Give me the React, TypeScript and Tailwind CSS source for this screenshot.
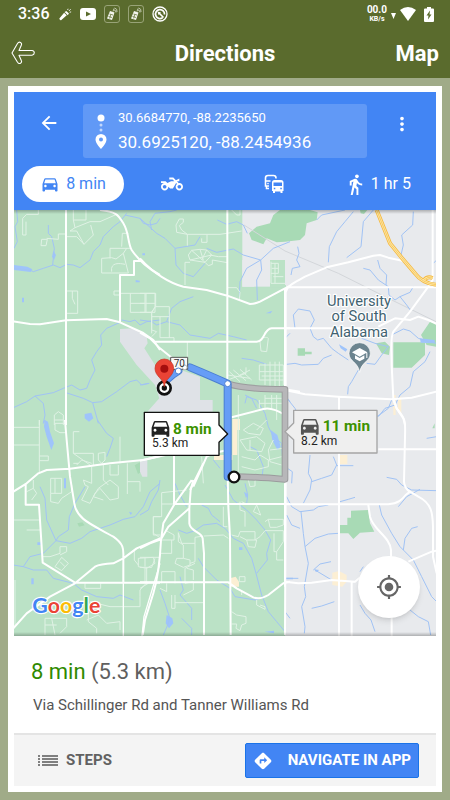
import { MdArrowBack, MdDirections, MdDirectionsCar, MdDirectionsWalk, MdMoreVert, MdMyLocation, MdTwoWheeler } from 'react-icons/md';

interface Tile {
  x: number;
  y: number;
  water: string;
  minor: string;
  major: string;
}

// Map is drawn at 3 units per pixel, one tile per area
const tiles: Tile[] = [
  {
    x: -12,
    y: -15,
    water:
      'M20 15L23 50L15 65L22 110L12 130M115 60V85L125 95L133 130L128 180M10 190L60 195L70 200L100 190L130 180L150 188L170 178L190 180L210 188L240 165L250 140L270 120L280 95L310 65L330 50L350 25M345 30L390 40L400 55L420 60L440 55L450 40M10 608L50 590L75 573L130 563L160 550L185 540L210 555L230 550L240 525L255 495L245 465L260 440L275 420L272 390L290 370L330 352M75 573L100 595L105 630L100 655M168 563L220 580L248 593L275 590L320 560L360 530L380 525L395 540L418 535M248 593L265 655M335 345L360 350L375 345L390 360L410 350L450 345',
    minor:
      'M85 15V28H50L38 40V90H48V50M95 103H112L108 122H93ZM110 100L145 103V87H168M190 15V45H228V15M190 45L195 68L240 50H270L320 28M195 68L180 78H200L222 118L250 90L242 60M168 95H200L222 118M337 85H355M337 85L335 125M275 160V204H355L340 145M275 160L305 158L318 162L340 145L350 130M300 130H362M300 130V160M305 200C300 170 330 175 345 178M168 258H203V325H168M187 258V280L195 298M333 265H437V305L425 320V385M361 265V322H405V265M361 295H405M333 258H312V270H333M405 322H425M133 660V630L145 620L160 630V660M133 645H160M88 645V660',
    major:
      'M168 15V660M10 349L60 357L90 358L168 346L290 342L330 352L400 384L430 405L450 435M270 15C320 20 325 30 340 55C358 85 352 110 365 135C385 165 420 195 450 210M330 352V210H372V168H398',
  },
  {
    x: 378,
    y: -15,
    water:
      'M0 40L50 85L75 100L105 130L165 120L180 95M35 75L30 50L45 25L90 20L110 15M105 130L108 180L130 205L160 215L195 175M232 45L260 58L290 50L310 60L322 85M200 130L230 142L280 132L310 150L362 165L400 130L450 110M362 165L365 195L350 225L352 285M362 165L320 190L300 230L298 275M0 345L35 350L50 360L80 350L95 310L120 290L160 275M80 350L120 360L150 390L210 400L235 385L280 395L320 405M305 460L340 465L380 478M315 570L335 580L350 610M435 400L450 385',
    minor:
      'M142 122V88L125 75L118 62L130 52V42H118L108 60L110 82L142 88H240L305 78M185 112V100M185 112H201V88M145 150L155 136L180 133L200 135L215 150L195 172L150 165ZM155 136L195 172M180 133L190 165M200 135L185 165M150 165L215 150M210 150L235 155L262 155M195 172L205 182L217 178V165L262 173M150 172H135V240M262 248H290L300 262L298 285M0 265H45V322H0M18 265V322M0 295H45M45 305H88V398M45 305L35 325V375L50 380L35 395M35 335H88M60 335V398H102V410M142 410V462M360 410L363 438L380 440L385 400C382 395 360 395 360 410M393 170V235H435M393 175H415V205H393M395 190H415M400 215H430M405 175V235M275 15L290 30H300V15',
    major:
      'M0 160C40 205 90 235 130 245L200 255L262 272L330 297Q345 297 360 290L435 250L450 243M262 15V540M40 410H350C375 410 370 372 395 370H450M435 250V550M0 383L30 400L60 430L100 462',
  },
  {
    x: 813,
    y: -15,
    water:
      'M95 45L110 30L180 15M205 20L180 50L155 80L133 125L130 172M265 15L235 50L228 125L185 158M385 20L383 60L350 90L355 120L348 150M38 125L42 145L35 165L45 185L22 190L18 210M235 190L255 195L280 225L310 245L312 270L330 285L345 275L365 300L378 318M278 165L285 190L305 210L303 240M345 275L375 262L385 245M30 370L25 330L40 312L75 318L88 345L75 370L85 395L98 405L115 400L140 430L160 445L190 465M5 478L30 475L50 480L100 478L115 460L140 450M230 400L270 415L310 425L290 450L270 478L245 475M220 495L200 530L190 545L188 568M435 440L420 470L385 500L375 545L345 570L330 600L300 610L280 635M320 390L355 372L375 378L400 400L430 410L455 415M445 175L455 165M15 590L0 570',
    minor: '',
    major:
      'M443 15V225L430 245L375 320L325 380C315 400 320 430 320 480L325 580L335 610L355 640L360 660M2 262C5 240 40 228 60 215L125 187L190 172L265 152L285 150L310 158L355 168M10 247H455M0 370H230M280 365L330 340L375 345L400 335L430 345L455 357M0 555L60 568L160 575L320 583L380 578L455 560M162 575V615M2 262V560',
  },
  {
    x: -12,
    y: 630,
    water:
      'M262 0L290 40L310 55L300 85L290 110M90 200L105 235L110 300L138 362L100 400L60 410L40 440L10 435M138 362L180 370L215 355L240 335L300 315L340 298L375 290L400 260L420 215L450 190M138 362L145 350L175 330L178 290L195 250L225 200M40 440L70 450L110 450L130 475L190 490L215 510L260 530L310 535L330 525L370 540M105 0L100 10',
    minor:
      'M88 0V160M10 22H88M10 75H88M88 108H115V122H88M135 10V30L150 38H165M135 10H165M190 35H208M190 35V100H250V135M190 100L240 135M200 135L215 120L245 130M190 130H205M265 100L285 97V120L275 130L265 120ZM122 175H155V220H122ZM122 220V245L145 250L155 235L185 215V195M50 215L70 205V180M70 205L80 220L65 240M135 175V220M245 140V190L220 180L225 195L235 200L215 240L240 250L255 220L270 205L300 240L325 235V200L300 180L265 205L250 230L280 240M280 135V180L295 195M300 135V165H325V135M330 50V130M352 130V222M352 185H390V215M10 300H90M50 330H90M98 410H120L150 400V380H170V395L150 405M135 440L155 412L175 430L155 452ZM150 425L165 440M373 390V420L385 435M385 415L430 412L435 430L410 445L385 440ZM405 412V440M450 290H430V345H450M405 445V488M390 530V510L410 488M225 490V505H272V490M240 545L300 560L390 560V530M105 595H170V620L150 640M105 595V645M125 595L135 645M105 615H140M15 480V620M235 575V605L260 625V640M230 600L265 585L290 610L330 605V630',
    major:
      'M165 0L170 60L180 170L193 250C200 300 250 315 310 350C345 375 340 390 340 415V488M10 215L50 190L85 160L110 150L180 146L300 130L400 120L450 108M47 190V254H87L98 428L195 488H450M10 625L50 580L120 530L195 490L255 440Q270 432 310 430L340 415L380 385L450 355',
  },
  {
    x: 378,
    y: 810,
    water:
      'M60 0L55 30L35 65L25 90L0 105M105 10L120 45L140 80M115 150L140 160L165 152L190 135L230 130L255 145L280 175L310 190L335 235L348 280L365 345L385 395L410 425L435 455M185 75L205 85L215 105L240 125M255 15L280 60L320 90L350 120L375 150L392 180L380 220L382 240L350 280M315 10L323 45L320 70M175 235L190 260L230 300L270 325L285 350L345 360L375 350M120 290L130 330L120 345L155 385V420M60 330L75 370L88 410L85 430L70 465M125 415L155 445V465',
    minor:
      'M65 110V38L140 30M65 72H100M65 110H40V160L63 175M65 180H102V165L75 150M95 180V220H63M45 235L35 262H0M0 232H60M20 262V310M115 158L125 190H165V172L190 168M115 158V185L130 195V235H110L105 250L130 262L150 255V240L130 235M165 190V245L150 250M65 310V275H105V310M0 325L25 310M60 325L80 335V310M135 310V265L165 250M135 310L160 305V330L130 345M140 265L160 270V300M105 368H190M95 345V385H105V345M192 168L250 165L265 175M250 80V140H262M300 65V90L315 95V140M305 65L315 70M350 75L340 95L362 105L350 75M385 118H430V135L410 142H390ZM385 118L375 125M275 165L295 170L300 155H345V180L360 170L375 152H430V185L410 215L402 215V160M300 170L320 180L325 200L345 202L350 180L320 180M410 215V240H430M275 395L290 405L318 410V430L305 435L300 452L288 445L290 432H275M298 290H315V305H298ZM350 360V375L375 388V380L360 375M325 0L330 20L345 18V0M305 345V330',
    major:
      'M155 0L105 70L70 130L63 180C60 240 55 290 40 340L15 420L8 465M0 205L30 190L63 178L85 140L148 85M160 0L152 30L148 85V130C150 155 185 155 188 175L192 220V465M102 -80V72H450M263 -20L265 80L270 170L272 465M0 307H265L290 325L340 352Q360 360 385 345L430 310L450 305M437 0L435 465',
  },
  {
    x: 378,
    y: 390,
    water: 'M315 190L320 170L350 180L375 220L385 260L400 290L425 310L430 390M0 135L25 130M330 320L350 330L370 380L365 420M220 360L240 385',
    minor:
      'M262 105L330 115M268 95L300 125M280 90L318 122M300 88L335 120M318 82V100L268 118M300 105L330 90M358 75H430V135M358 75V120H435M358 95H430M375 70V135M390 65V140M405 65V140M418 65V140M365 108H435M295 165V400M358 180V205M358 190H430V240M375 165V210M395 165V205M410 165V240M375 175H435M310 270L340 250L370 265L360 285L325 280ZM300 300L350 290L375 310L365 335L320 330ZM330 300V330M350 270L380 240M305 350L345 360L360 345L385 360V380L345 390L305 380M385 360L425 350M390 330L430 325M400 300L385 330L390 365L425 375M102 270V450M185 350L190 430',
    major: 'M275 232L370 207Q395 200 435 225M435 148L480 155M0 362L100 340M160 440L200 350L220 340L262 330M102 345V450M150 450L190 370',
  },
  {
    x: 813,
    y: 570,
    water:
      'M10 0L30 25L45 55M20 250L22 215L0 200M55 310L75 270L80 240L70 220L75 165M80 245L110 235L140 225L155 195L145 170M155 197L205 197M165 305L190 298L210 292M5 290L20 320L45 335L85 330L100 320L130 315M48 335L55 400L60 440L70 490L58 560L62 590L50 620L60 680L58 700M5 345L20 375L45 385M60 440L90 415L130 402L160 400M90 510L140 540M85 510L105 492L138 485M80 625L110 618L148 605M305 232L335 238L350 255L380 270L455 272M340 320L365 290L405 268M283 315L290 345L320 400L345 440L385 480L410 530L440 590L455 605M355 450L360 415L380 385L398 380M225 515L235 500M225 615L240 640L258 660L270 695M375 630L400 650L430 665L437 705M320 0L310 25L290 40L275 50M425 115L455 110M0 535L40 535M0 635L15 655',
    minor: '',
    major:
      'M0 313H310C340 310 350 300 362 285L375 275M162 30V710M280 148H455M325 0L335 25C360 55 362 60 360 110L357 245Q358 265 375 275L400 290C440 310 443 340 444 380V470L455 520M250 315L255 350C265 390 315 410 318 450V470M320 650V710M0 545L40 550L80 548L140 540L210 545L240 520M200 545V710M370 485L440 455L455 452M0 250V560',
  },
];

const carPath =
  'M18.92 6.01C18.72 5.42 18.16 5 17.5 5h-11c-.66 0-1.21.42-1.42 1.01L3 12v8c0 .55.45 1 1 1h1c.55 0 1-.45 1-1v-1h12v1c0 .55.45 1 1 1h1c.55 0 1-.45 1-1v-8l-2.08-5.99zM6.5 16c-.83 0-1.5-.67-1.5-1.5S5.67 13 6.5 13s1.5.67 1.5 1.5S7.33 16 6.5 16zm11 0c-.83 0-1.5-.67-1.5-1.5s.67-1.5 1.5-1.5 1.5.67 1.5 1.5-.67 1.5-1.5 1.5zM5 11l1.5-4.5h11L19 11H5z';

const StatusBar = () => (
  <div className="flex h-7 items-center justify-between pl-[18px] pr-4 text-white">
    <div className="flex items-center gap-2">
      <span className="w-8 text-base font-medium">3:36</span>
      <svg className="h-4 w-[14px]" viewBox="0 0 16 16" fill="currentColor">
        <path d="M1.500 13L7 6.500l3 3L3.500 15q-1.500.5-2-2zM7.500 5.700l2-1.200 3 3-1.300 2z" />
        <path d="M11 3.500l.5-1.500M12.500 4.500l2-2M13.300 6l1.700-.4" stroke="currentColor" fill="none" />
      </svg>
      <svg className="h-3 w-4" viewBox="0 0 16 12">
        <rect width="16" height="12" rx="3" fill="white" />
        <path d="M6 3.500v5L11 6z" fill="#5a6b2d" />
      </svg>
      {[0, 1].map((n) => (
        <svg key={n} className="h-[18px] w-4" viewBox="0 0 16 18" fill="none">
          <rect x=".5" y=".5" width="15" height="17" rx="2.500" stroke="#98a377" />
          <path d="M6 6l4.500 1.500-2.500 7.500-5-1.500z" fill="#f4f5ef" />
          <path d="M5.500 9l3.500 1M4.500 11.500l3.500 1M6.700 9.500l-1 4" stroke="#5a6b2d" strokeWidth=".7" />
          <path d="M9 6.500l1-3M10 5q2 0 2 2.500M10.500 3q3 .5 2.500 4" stroke="#c3cab0" />
        </svg>
      ))}
      <svg className="h-4 w-4" viewBox="0 0 16 16" fill="none" stroke="white">
        <circle cx="8" cy="8" r="7" strokeWidth="1.300" />
        <path d="M10.500 11.800a4.500 4.500 0 1 1 2-3.300M7 7l4.500 4.500" strokeWidth="1.700" />
        <path d="M5.500 5.500l1 3.500 2.500-2.500z" fill="white" stroke="none" />
      </svg>
    </div>
    <div className="flex items-center gap-1">
      <div className="flex flex-col items-center font-bold">
        <span className="text-[10px] leading-[10px]">00.0</span>
        <span className="text-[7px] leading-[9px]">KB/s</span>
      </div>
      <svg className="mt-1 h-[6px] w-[5px]" viewBox="0 0 5 6">
        <path d="M0 0h5L2.500 6z" fill="white" />
      </svg>
      <svg className="h-[14px] w-4" viewBox="0 0 16 14">
        <path d="M0 3Q8-3 16 3L8 14z" fill="white" />
      </svg>
      <svg className="ml-1 h-[15px] w-[10px]" viewBox="0 0 10 15">
        <path d="M3 0h4v1.500h2q1 0 1 1V14q0 1-1 1H1q-1 0-1-1V2.500q0-1 1-1h2z" fill="white" />
        <path d="M6 3.500L2.500 8.500h2L4 12.500l3.500-5h-2z" fill="#5a6b2d" />
      </svg>
    </div>
  </div>
);

const Header = () => (
  <header className="h-[78px] bg-[#5a6b2d] text-white">
    <StatusBar />
    <div className="grid h-[50px] grid-cols-[1fr_auto_1fr] items-center px-[11px]">
      <button aria-label="Back" className="w-6">
        <svg className="h-6 w-6" viewBox="0 0 24 24" fill="none" stroke="white" strokeWidth="1.100" strokeLinejoin="round">
          <path d="M1 12L6.500 2.500q1.300-2 3-1 1.700 1 .7 3L8 9.500H21q2.300.3 2.300 2.300T21 14.200H8l2.200 5q1 2-.7 3t-3-1z" />
        </svg>
      </button>
      <h1 className="text-[22px] font-bold">Directions</h1>
      <button className="justify-self-end text-[22px] font-bold">Map</button>
    </div>
  </header>
);

// Two buses, the front one solid
const TransitIcon = () => (
  <svg className="h-5 w-5" viewBox="0 0 20 20" fill="none" stroke="currentColor">
    <path d="M12 4.500V4q0-2.500-2.500-2.500H4Q1.500 1.500 1.500 4v8H5M1.500 7h5M2.500 12v2.500H5" strokeWidth="1.600" />
    <circle cx="4" cy="9.600" r=".8" fill="currentColor" stroke="none" />
    <path d="M8 17V8.500Q8 6 10.500 6h6.500q2.500 0 2.500 2.500V17h-1v2h-2v-1.500h-5.500V19H9v-2z" fill="currentColor" stroke="none" />
    <path d="M9.500 8.500H18V12H9.500z" fill="#4285f4" stroke="none" />
    <path d="M9.800 14.500h1.500M16.300 14.500h1.500" stroke="#4285f4" strokeWidth="1.500" />
  </svg>
);

const RouteHeader = () => (
  <div className="bg-[#4285f4] text-white">
    <div className="flex items-start pl-6 pr-[23px] pt-3">
      <button aria-label="Close route" className="mt-2 h-[22px] w-[22px]">
        <MdArrowBack className="h-[22px] w-[22px]" />
      </button>
      <div className="ml-[23px] flex h-[54px] min-w-0 flex-1 items-center rounded-[3px] bg-[#6199f6] pl-2.5">
        <svg className="h-9 w-4 shrink-0" viewBox="0 0 16 36" fill="white">
          <circle cx="8" cy="5" r="3.500" />
          <circle cx="8" cy="12" r="1.500" opacity=".6" />
          <circle cx="8" cy="17" r="1.500" opacity=".6" />
          <path d="M8 21a5.500 5.500 0 0 0-5.500 5.500C2.500 30.500 8 36 8 36s5.500-5.500 5.500-9.500A5.500 5.500 0 0 0 8 21zm0 3.500a2 2 0 1 1 0 4 2 2 0 0 1 0-4z" fillRule="evenodd" />
        </svg>
        <div className="ml-[9px] flex flex-col gap-1.5">
          <span className="text-[13px] leading-4">30.6684770, -88.2235650</span>
          <span className="text-[17px] leading-5">30.6925120, -88.2454936</span>
        </div>
      </div>
      <button aria-label="More options" className="ml-6 mt-2 h-[22px] w-[22px]">
        <MdMoreVert className="h-[24px] w-[22px]" />
      </button>
    </div>
    <div className="flex items-center px-2 pb-2 pt-2 text-base">
      <button className="flex h-9 w-[102px] items-center justify-center gap-1.5 rounded-full bg-white text-[#4285f4]">
        <MdDirectionsCar className="h-5 w-5" />
        <span>8 min</span>
      </button>
      <button aria-label="Two-wheeler" className="ml-9 flex w-6 justify-center">
        <MdTwoWheeler className="h-[22px] w-[22px]" />
      </button>
      <button aria-label="Transit" className="ml-20">
        <TransitIcon />
      </button>
      <button className="ml-auto mr-[17px] flex items-center gap-1">
        <MdDirectionsWalk className="h-[23px] w-[23px]" />
        <span>1 hr 5</span>
      </button>
    </div>
  </div>
);

const MapCanvas = () => (
  <svg className="block h-auto w-full" viewBox="0 0 1266 1278" strokeLinejoin="round">
    <rect width="1266" height="1278" fill="#bbe2c6" />
    <g fill="#e8eaed">
      <path d="M685 0H1266V1278H813V390L816 225H768V150L720 230H685z" />
      <path d="M318 357L358 355L398 380L401 400L391 415L423 465L440 510L500 480L558 500V570H596V605H400L436 565L423 525L368 465L318 395z" fill="#dfe2e7" />
    </g>
    <path d="M768 150H813V232H768z" fill="#bbe2c6" />
    <path d="M685 150H768V230H685z" fill="#e8eaed" />
    <g fill="#a8dab5">
      <path d="M705 70L728 50L768 40L778 15L798 0H888L911 7L908 30L878 40L873 75L858 90L813 95L788 97L758 85L748 103L713 90z" />
      <path d="M1038 0H1060L1050 12L1040 10zM1248 335L1266 340V410L1238 405L1221 375zM1138 397H1233V435L1193 473H1138zM1086 400L1113 395L1128 410L1125 435L1103 430zM851 415H873V425H893V433H873V437H851z" />
      <path d="M978 945H1000V923H1011V902L1063 900L1068 940L1081 965L1038 968L1018 987L1003 970H978zM362 766L390 750L400 775L372 792zM190 940L205 937L212 946L195 950zM1262 640V655H1255z" />
    </g>
    <path d="M378 755L400 750V800H385L378 785z" fill="#dfe2e7" />
    <path d="M655 627H678V660H670V735H655zM600 735H655V750H600zM955 1088L975 1083L998 1095V1115L985 1130L955 1125zM978 735H1000V762H978zM648 1105L665 1100L675 1115V1130H650zM1138 555H1145V615H1138zM1152 560H1162V610H1152z" fill="#fcefd4" />
    <path d="M690 45L813 123L973 190L1113 260L1266 335" fill="none" stroke="#d3d6da" strokeWidth="3" />
    {/* lakes */}
    <g fill="#9fc4fb">
      <path d="M0 165L40 170L55 178L50 186L0 180zM118 122L126 135L120 150L114 140zM212 612L232 608L238 625L225 635L212 625zM385 130h8v6h-8zM365 210l12 2v5h-12zM92 630L102 635L108 665L120 700L112 720L98 680L90 650zM150 805h6v30h-6zM52 1105h7v18h-7zM70 997h10v8h-10zM345 905l10 3-5 7z" />
      <path d="M770 660L790 675L800 710L790 720L775 690zM975 403L1000 418L995 425L980 415zM1218 385L1262 390V400L1220 398zM755 310L775 302L770 310zM675 1012h10v8h-10zM458 1215L475 1225L478 1240L465 1255L455 1240zM24 263h6v14h-6zM900 1078l16 2-10 6zM815 1103h22v5h-22zM752 1265L780 1262V1270zM690 845l12 8-6 12z" />
    </g>
    {tiles.map((tile) => (
      <path key={`w${tile.x}-${tile.y}`} transform={`translate(${tile.x} ${tile.y})`} d={tile.water} fill="none" stroke="#a1c3f5" strokeWidth="3" />
    ))}
    {tiles.map((tile) => (
      <path key={`s${tile.x}-${tile.y}`} transform={`translate(${tile.x} ${tile.y})`} d={tile.minor} fill="none" stroke="#e0f2e5" strokeWidth="3" />
    ))}
    {tiles.map((tile) => (
      <path key={`m${tile.x}-${tile.y}`} transform={`translate(${tile.x} ${tile.y})`} d={tile.major} fill="none" stroke="white" strokeWidth="6" />
    ))}
    <path d="M328 1118V1278M438 1060L390 1220L384 1278" fill="none" stroke="white" strokeWidth="4" />
    {/* highway */}
    <g fill="none">
      <path d="M1088 0L1128 100L1163 143L1203 190Q1225 220 1266 224M1230 210Q1240 198 1256 204" stroke="#f5b942" strokeWidth="12" />
      <path d="M1088 0L1128 100L1163 143L1203 190Q1225 220 1266 224M1230 210Q1240 198 1256 204" stroke="#fde9a8" strokeWidth="7" />
      <path d="M1088 0L1128 100L1163 143L1203 190Q1225 220 1266 224M1230 210Q1240 198 1256 204" stroke="#f5b942" strokeWidth="2" />
    </g>

    {/* routes */}
    <g fill="none" strokeLinecap="round">
      <path d="M641 521Q690 538 813 538V808Q720 800 660 800" stroke="#9b9b9d" strokeWidth="20" />
      <path d="M641 521Q690 538 813 538V808Q720 800 660 800" stroke="#b7b7b9" strokeWidth="14" />
      <path d="M462 506L476 494L493 483M528 472Q600 502 641 521V800H650" stroke="#4b7fd1" strokeWidth="24" />
      <path d="M462 506L476 494L493 483M528 472Q600 502 641 521V800H650" stroke="#669df6" strokeWidth="18" />
    </g>
    <path d="M470 442H521V478H470z" fill="#f8f8f8" stroke="#555" strokeWidth="3" />
    <g fill="white" stroke="#4b7fd1" strokeWidth="3">
      <circle cx="493" cy="483" r="9" />
      <circle cx="512" cy="472" r="7" stroke="#bbb" />
      <circle cx="641" cy="521" r="9" />
    </g>
    <text x="479" y="471" fontSize="30" fill="#333">70</text>
    <circle cx="660" cy="801" r="16" fill="white" stroke="#111" strokeWidth="7" />
    <circle cx="451" cy="534" r="19" fill="white" stroke="#111" strokeWidth="8" />
    <circle cx="451" cy="534" r="8" fill="#111" />
    <path d="M451 530C449 505 423 500 423 475A28 28 0 0 1 479 475C479 500 453 505 451 530z" fill="#ea4335" stroke="#c5321f" strokeWidth="2" />
    <circle cx="451" cy="476" r="12" fill="#a50e0e" />

    {/* route callouts */}
    <path d="M391 607H615V645L641 672L615 697V736H391z" fill="white" stroke="#111" strokeWidth="4" />
    <path d={carPath} transform="translate(404 618) scale(2.950)" fill="#222" />
    <text x="477" y="671" fontSize="46" fontWeight="700" fill="#3c9200">8 min</text>
    <text x="414" y="712" fontSize="36" fill="#222">5.3 km</text>
    <path d="M839 601H1089V729H839V689L813 665L839 639z" fill="#efefef" stroke="#a5a5a5" strokeWidth="4" />
    <path d={carPath} transform="translate(852 612) scale(2.950)" fill="#555" />
    <text x="926" y="664" fontSize="46" fontWeight="700" fill="#3c9200">11 min</text>
    <text x="861" y="705" fontSize="36" fill="#222">8.2 km</text>

    {/* university pin */}
    <g fontSize="44" fill="#3f6270" stroke="white" strokeWidth="7" textAnchor="middle" paintOrder="stroke">
      <text x="1035" y="288">University</text>
      <text x="1035" y="334">of South</text>
      <text x="1035" y="380">Alabama</text>
    </g>
    <path d="M1037 487C1032 455 1005 455 1005 430A32 32 0 0 1 1069 430C1069 455 1042 455 1037 487z" fill="#6c848f" stroke="white" strokeWidth="2" />
    <path d="M1014 427L1037 414L1060 427L1037 440zM1023 436L1037 444L1051 436V446L1037 454L1023 446zM1057 428H1060V444H1057z" fill="white" />

    <text x="55" y="1208" fontSize="64" stroke="white" strokeWidth="7" paintOrder="stroke" className="font-['Lato',sans-serif] font-bold">
      <tspan fill="#4285f4">G</tspan>
      <tspan fill="#ea4335">o</tspan>
      <tspan fill="#fbbc05">o</tspan>
      <tspan fill="#4285f4">g</tspan>
      <tspan fill="#34a853">l</tspan>
      <tspan fill="#ea4335">e</tspan>
    </text>
  </svg>
);

const App = () => {
  return (
    <div className="flex min-h-screen flex-col bg-[#a0ab88] font-['Roboto',sans-serif]">
      <Header />
      <main className="flex flex-1 flex-col p-2">
        <div className="flex flex-1 flex-col bg-white p-1.5">
          <RouteHeader />
          <section className="relative" aria-label="Route map">
            <MapCanvas />
            <div className="absolute inset-x-0 top-0 h-1 bg-linear-to-b from-black/25 to-transparent" />
            <div className="absolute inset-x-0 bottom-0 h-1 bg-linear-to-t from-black/25 to-transparent" />
            <button aria-label="My location" className="absolute bottom-[18px] right-4 flex h-[62px] w-[62px] items-center justify-center rounded-full bg-white text-[#666] shadow-md">
              <MdMyLocation className="h-[26px] w-[26px]" />
            </button>
          </section>
          <section className="flex-1 px-[17px] pt-5">
            <h2 className="text-[22px] leading-8 text-[#5f5f5f]">
              <span className="text-[#2f8a00]">8 min</span> (5.3 km)
            </h2>
            <p className="mt-[7px] pl-0.5 text-[15px] leading-5 text-[#555]">Via Schillinger Rd and Tanner Williams Rd</p>
          </section>
          <footer className="flex h-[53px] items-center justify-between border-t-2 border-[#e4e4e4] bg-[#f4f4f4] pl-6 pr-[17px]">
            <button className="flex items-center gap-2 text-[15px] font-bold text-[#616161]">
              <svg className="h-[11px] w-5" viewBox="0 0 20 11" fill="currentColor">
                <path d="M0 0h2v2H0zM4 0h16v2H4zM0 3h2v2H0zM4 3h16v2H4zM0 6h2v2H0zM4 6h16v2H4zM0 9h2v2H0zM4 9h16v2H4z" opacity=".8" />
              </svg>
              STEPS
            </button>
            <button className="flex h-[35px] w-[174px] items-center justify-between rounded-xs border border-[#1a73e8] bg-[#4285f4] px-[7px] text-[15px] font-bold text-white">
              <MdDirections className="h-5 w-5" />
              NAVIGATE IN APP
            </button>
          </footer>
        </div>
      </main>
    </div>
  );
};

export default App;
